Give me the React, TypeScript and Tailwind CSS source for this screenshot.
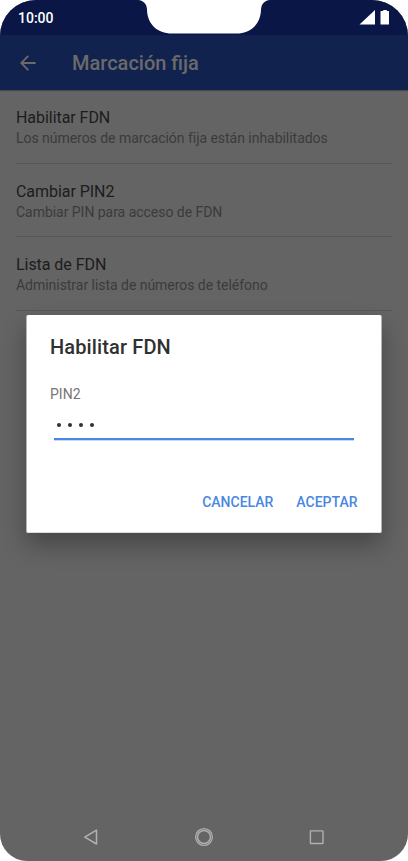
const items = [
  {
    title: "Habilitar FDN",
    summary: "Los números de marcación fija están inhabilitados",
  },
  { title: "Cambiar PIN2", summary: "Cambiar PIN para acceso de FDN" },
  { title: "Lista de FDN", summary: "Administrar lista de números de teléfono" },
];

function StatusBar() {
  return (
    <div className="relative flex h-[35px] items-start justify-between bg-[#0a1645] text-white">
      <span className="ml-[18px] mt-[8px] text-[14px] leading-5 font-medium">
        10:00
      </span>
      <svg
        className="absolute left-[138px] top-0"
        width="132"
        height="34"
        viewBox="0 0 132 34"
        fill="white"
      >
        <path d="M0 0C6 0.5 9 4.500 9 10C9.500 24 19 33.500 34 33.500H98C113 33.500 122.500 24 123 10C123 4.500 126 0.500 132 0Z" />
      </svg>
      <svg
        className="mr-[18px] mt-[9px]"
        width="31"
        height="17"
        viewBox="0 0 31 17"
        fill="white"
      >
        <path d="M16 1V15.500H0.500Z" />
        <path d="M24.200 1H27.800V2H29.500Q30 2 30 2.500V15Q30 15.500 29.500 15.500H22Q21.500 15.500 21.500 15V2.500Q21.500 2 22 2H24.200Z" />
      </svg>
    </div>
  );
}

function AppBar() {
  return (
    <header className="flex h-[55px] items-center bg-[#12224f] text-[#6a6a6a] shadow-[0_1px_1px_rgba(0,0,0,0.25)]">
      <svg
        className="ml-[20px]"
        width="16"
        height="16"
        viewBox="0 0 16 16"
        fill="none"
        stroke="currentColor"
        strokeWidth="1.8"
      >
        <path d="M15.700 8H1.500M8.300 0.800L1.200 8L8.300 15.200" />
      </svg>
      <h1 className="ml-[36px] text-[20px] leading-6 font-medium">
        Marcación fija
      </h1>
    </header>
  );
}

function Dialog() {
  return (
    <div className="absolute left-[26px] top-[315px] flex h-[218px] w-[356px] flex-col rounded-[2px] border-x border-b border-x-[#b4b4b4] border-b-[#dcdcdc] bg-white px-[23px] shadow-[0_12px_24px_rgba(0,0,0,0.300)]">
      <h2 className="mt-[20px] text-[20px] leading-6 font-medium tracking-[0.13px] text-[#303030]">
        Habilitar FDN
      </h2>
      <label className="mt-[25px] text-[14px] leading-5 text-[#757575]">
        PIN2
      </label>
      <div className="ml-[4px] mr-[4px] flex h-[36px] gap-[6.600px] border-b-2 border-[#4a87e2] pl-[3px] pt-[18.500px] shadow-[0_1px_0_rgba(74,135,226,0.300)]">
        {[0, 1, 2, 3].map((n) => (
          <span key={n} className="size-[4.300px] rounded-full bg-[#303030]" />
        ))}
      </div>
      <div className="mr-[0.5px] mt-[52px] flex justify-end gap-[23px] text-[14px] leading-5 font-medium text-[#4a87e2]">
        <button>CANCELAR</button>
        <button>ACEPTAR</button>
      </div>
    </div>
  );
}

function NavBar() {
  return (
    <nav className="mb-[13px] flex h-[22px] items-center justify-between px-[80px] text-[#b0b0b0]">
      <svg width="22" height="22" viewBox="0 0 22 22" fill="none" stroke="currentColor" strokeWidth="1.5">
        <path d="M16.500 4.200V18L4.800 11.100Z" strokeLinejoin="round" />
      </svg>
      <svg width="22" height="22" viewBox="0 0 22 22" fill="none" stroke="currentColor">
        <circle cx="11" cy="11" r="8.400" strokeWidth="1.300" />
        <circle cx="11" cy="11" r="6.500" strokeWidth="1.500" />
      </svg>
      <svg width="22" height="22" viewBox="0 0 22 22" fill="none" stroke="currentColor" strokeWidth="1.400">
        <rect x="4.400" y="4.900" width="12.600" height="12.600" rx="0.500" />
      </svg>
    </nav>
  );
}

export default function App() {
  return (
    <div className="h-[861px] w-[408px] bg-white font-['Roboto',sans-serif]">
      <div className="relative flex h-full flex-col overflow-hidden rounded-t-[36px] rounded-b-[27px] bg-[#646464]">
        <StatusBar />
        <AppBar />
        <main className="flex-1 px-4">
          {items.map((item) => (
            <div
              key={item.title}
              className="h-[73.500px] border-b border-[#575757] pt-[17px]"
            >
              <div className="text-[16px] leading-[21px] tracking-[-0.05px] text-[#1c1c1c]">
                {item.title}
              </div>
              <div className="text-[14px] leading-5 tracking-[-0.035px] text-[#3b3b3b]">
                {item.summary}
              </div>
            </div>
          ))}
        </main>
        <NavBar />
        <Dialog />
      </div>
    </div>
  );
}
